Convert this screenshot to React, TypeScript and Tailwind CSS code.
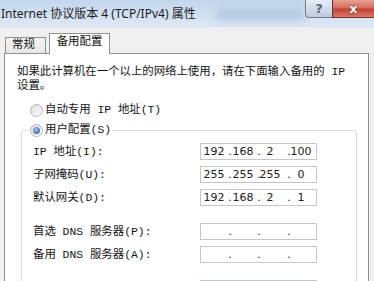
import React from "react";

const CJK = "font-[family-name:'Liberation_Mono','Noto_Sans_CJK_SC',monospace]";

function Radio({ checked }: { checked?: boolean }) {
  return (
    <span className="w-[13px] h-[13px] shrink-0 rounded-full border border-[#b4b8bd] bg-[linear-gradient(135deg,#dcdde0,#fbfbfb)] flex items-center justify-center">
      {checked && (
        <span className="w-[7px] h-[7px] rounded-full bg-[radial-gradient(circle_at_40%_35%,#9cc9f2,#1c4f8e)]" />
      )}
    </span>
  );
}

function Cell({ ml, children }: { ml: string; children: React.ReactNode }) {
  return (
    <span className={`w-0 flex justify-center whitespace-nowrap ${ml}`}>{children}</span>
  );
}

function IpField({ parts }: { parts?: string[] }) {
  const p = parts ?? ["", "", "", ""];
  return (
    <div className="w-[117px] h-[17px] border border-[#c3c7cc] bg-white flex items-center font-[family-name:'DejaVu_Sans',sans-serif] text-[11px] leading-none text-[#202020]">
      <Cell ml="ml-[13px]">{p[0]}</Cell>
      <Cell ml="ml-[16px]">.</Cell>
      <Cell ml="ml-[13px]">{p[1]}</Cell>
      <Cell ml="ml-[16px]">.</Cell>
      <Cell ml="ml-[11px]">{p[2]}</Cell>
      <Cell ml="ml-[19px]">.</Cell>
      <Cell ml="ml-[12px]">{p[3]}</Cell>
    </div>
  );
}

function Row({ label, parts, mt }: { label: string; parts?: string[]; mt: string }) {
  return (
    <div className={`flex items-center h-[17px] ${mt}`}>
      <div className="w-[167px] whitespace-nowrap">{label}</div>
      <IpField parts={parts} />
    </div>
  );
}

export default function App() {
  return (
    <div className="w-[374px] h-[281px] overflow-hidden bg-[#f0f0f0] flex flex-col">
      {/* title bar */}
      <div className="relative h-[27px] shrink-0 flex bg-[linear-gradient(180deg,#c2d6ec,#d3e2f2_60%,#dce8f5)]">
        <div className="absolute left-[215px] top-[10px] w-[90px] h-[10px] rounded-full bg-[#8ea8c6]/50 blur-[5px]" />
        <div className="flex-1 pl-[1px] pt-[6px] text-[12px] leading-[16px] text-[#1c1c1c] font-[family-name:'Noto_Sans','Noto_Sans_CJK_SC',sans-serif] whitespace-nowrap relative">
          Internet 协议版本 4 (TCP/IPv4) 属性
        </div>
        <div className="flex items-start relative">
          <div className="w-[27px] h-[19px] -mt-px rounded-bl-[4px] border border-[#6f7d8e] border-r-0 bg-[linear-gradient(180deg,#e9eff6,#d1dceb_50%,#bccbdd)] flex items-center justify-center text-[13px] font-bold text-[#5a6472] font-[family-name:'DejaVu_Sans',sans-serif] leading-none">
            ?
          </div>
          <div className="w-[42px] h-[19px] -mt-px border border-[#7a2a22] border-r-0 bg-[linear-gradient(180deg,#e6a294,#d4705f_45%,#c4402f_55%,#d9786a)] flex items-center justify-center text-[13px] font-bold text-white font-[family-name:'DejaVu_Sans',sans-serif] leading-none [text-shadow:0_0_2px_#5a1a12]">
            x
          </div>
        </div>
      </div>
      <div className="h-px shrink-0 bg-[#e9eef4]" />

      {/* tabs */}
      <div className={`h-[25px] shrink-0 flex items-end pl-[5px] text-[11.4px] text-[#111] ${CJK}`}>
        <div className="w-[41px] h-[16px] border border-b-0 border-[#8e9196] bg-[linear-gradient(180deg,#f3f3f3,#e7e7e7)] flex items-center pl-[6px] leading-none">
          常规
        </div>
        <div className="ml-[3px] w-[61px] h-[21px] -mb-px relative z-10 border border-b-0 border-[#8e9196] bg-white flex items-center justify-center pb-[2px] leading-none">
          备用配置
        </div>
      </div>

      {/* panel */}
      <div className={`ml-[4px] w-[365px] flex-1 bg-white border border-b-0 border-[#8e9196] text-[11.4px] leading-[14px] text-[#141414] ${CJK}`}>
        <div className="pt-[11px] pl-[12px]">
          <p className="whitespace-nowrap">如果此计算机在一个以上的网络上使用，请在下面输入备用的 IP</p>
          <p>设置。</p>
        </div>
        <div className="mt-[9px] ml-[25px] h-[16px] flex items-center gap-[2px]">
          <Radio />
          <span className="whitespace-nowrap">自动专用 IP 地址(T)</span>
        </div>
        <fieldset className="mt-[4px] ml-[16px] w-[336px] border border-[#d5dbe0] rounded-[3px] pl-[11px]">
          <legend className="-ml-[4px] px-[1px]">
            <span className="h-[16px] flex items-center gap-[2px]">
              <Radio checked />
              <span className="whitespace-nowrap">用户配置(S)</span>
            </span>
          </legend>
          <Row mt="mt-[5px]" label="IP 地址(I):" parts={["192", "168", "2", "100"]} />
          <Row mt="mt-[6px]" label="子网掩码(U):" parts={["255", "255", "255", "0"]} />
          <Row mt="mt-[6px]" label="默认网关(D):" parts={["192", "168", "2", "1"]} />
          <Row mt="mt-[17px]" label="首选 DNS 服务器(P):" />
          <Row mt="mt-[6px]" label="备用 DNS 服务器(A):" />
          <div className="mt-[17px] h-[17px] flex">
            <div className="w-[167px]" />
            <div className="w-[117px] h-[17px] border border-[#c3c7cc] bg-white" />
          </div>
        </fieldset>
      </div>
    </div>
  );
}
